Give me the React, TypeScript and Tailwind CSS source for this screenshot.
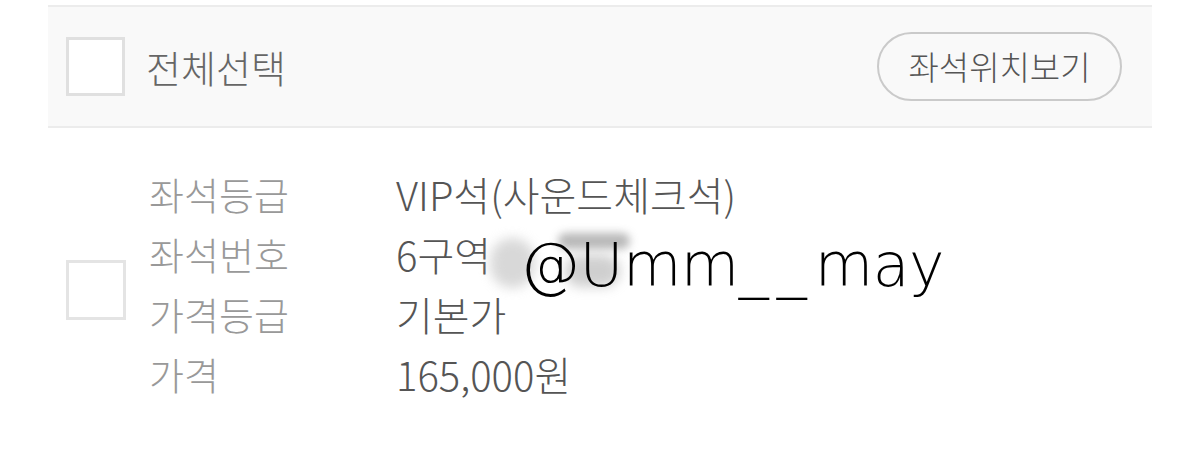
const rows = [
  { label: "좌석등급", value: "VIP석(사운드체크석)" },
  { label: "좌석번호", value: "6구역" },
  { label: "가격등급", value: "기본가" },
  { label: "가격", value: "165,000원" },
];

const font = { fontFamily: '"Noto Sans CJK KR", "Noto Sans", sans-serif' };

function Checkbox() {
  return <div className="h-[59px] w-[59px] shrink-0 border-[3px] border-[#e0e0e0] bg-white" />;
}

export default function App() {
  return (
    <div className="relative h-[472px] w-[1200px] overflow-hidden bg-white" style={font}>
      {/* select-all bar */}
      <div className="mx-[48px] mt-[5px] flex h-[123px] items-center border-y-2 border-[#ececec] bg-[#f9f9f9] pl-[18px] pr-[30px]">
        <Checkbox />
        <span className="ml-[21px] text-[38px] leading-none font-light text-[#666]">전체선택</span>
        <button className="ml-auto flex h-[69px] w-[245px] items-center justify-center rounded-full border-2 border-[#cacaca] text-[33px] leading-none font-light text-[#555]">
          좌석위치보기
        </button>
      </div>

      {/* ticket row */}
      <div className="mx-[48px] mt-[46px] flex items-center pl-[18px]">
        <div className="mt-[2px] h-[60px] w-[60px] shrink-0 border-[3px] border-[#e4e4e4] bg-white" />
        <div className="ml-[23px] -mt-[10px] grid grid-cols-[247px_1fr] leading-[60px] font-light">
          {rows.map((r) => (
            <div key={r.label} className="contents">
              <span className="text-[38px] text-[#999]">{r.label}</span>
              <span className="text-[40px] text-[#555]">{r.value}</span>
            </div>
          ))}
        </div>
      </div>

      {/* smudged seat number */}
      <div className="absolute left-[490px] top-[238px] h-[50px] w-[45px] rounded-full bg-[#c8c8c8] opacity-70 blur-[6px]" />
      <div className="absolute left-[558px] top-[233px] h-[16px] w-[72px] rounded-full bg-[#8a8a8a] opacity-60 blur-[4px]" />
      <div className="absolute left-[565px] top-[255px] h-[32px] w-[55px] rounded-full bg-[#b0b0b0] opacity-60 blur-[6px]" />

      {/* handle */}
      <div
        className="absolute left-[520px] top-[235px] text-[60px] leading-none tracking-[-0.5px] text-black"
        style={{ fontFamily: '"DejaVu Sans", sans-serif', fontWeight: 300 }}
      >
        @Umm<span className="tracking-[8px]">__</span>may
      </div>
    </div>
  );
}
